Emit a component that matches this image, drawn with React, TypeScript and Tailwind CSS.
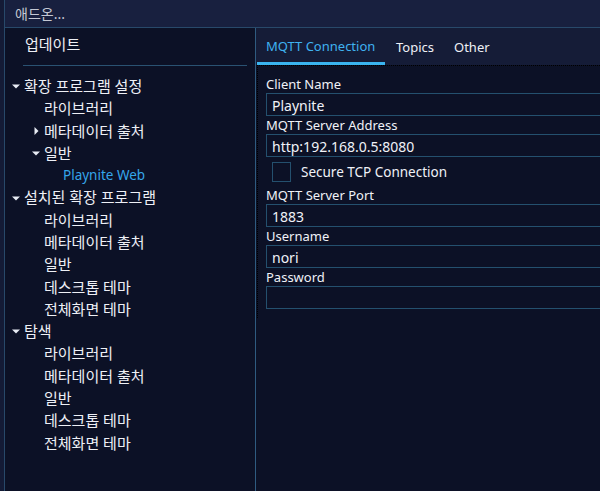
const font = { fontFamily: '"Noto Sans", "Noto Sans CJK KR", sans-serif' };

function Caret({ open }: { open: boolean }) {
  return (
    <svg width="8" height="8" viewBox="0 0 8 8" className="shrink-0">
      {open ? <path d="M0 2.5 L8 2.5 L4 6.5 Z" fill="#e8ecf4" /> : <path d="M2.5 0 L6.5 4 L2.5 8 Z" fill="#e8ecf4" />}
    </svg>
  );
}

type Node = { label: string; depth: number; caret?: "open" | "closed"; active?: boolean };

const tree: Node[] = [
  { label: "확장 프로그램 설정", depth: 0, caret: "open" },
  { label: "라이브러리", depth: 1 },
  { label: "메타데이터 출처", depth: 1, caret: "closed" },
  { label: "일반", depth: 1, caret: "open" },
  { label: "Playnite Web", depth: 2, active: true },
  { label: "설치된 확장 프로그램", depth: 0, caret: "open" },
  { label: "라이브러리", depth: 1 },
  { label: "메타데이터 출처", depth: 1 },
  { label: "일반", depth: 1 },
  { label: "데스크톱 테마", depth: 1 },
  { label: "전체화면 테마", depth: 1 },
  { label: "탐색", depth: 0, caret: "open" },
  { label: "라이브러리", depth: 1 },
  { label: "메타데이터 출처", depth: 1 },
  { label: "일반", depth: 1 },
  { label: "데스크톱 테마", depth: 1 },
  { label: "전체화면 테마", depth: 1 },
];

function TreeRow({ node }: { node: Node }) {
  let pad = "pl-[39px]";
  if (node.caret && node.depth === 0) pad = "pl-[7px]";
  else if (node.caret) pad = "pl-[27px]";
  else if (node.depth === 2) pad = "pl-[58px]";
  return (
    <div
      className={`flex h-[22.3px] items-center gap-[4px] ${pad} ${
        node.active ? "text-[13.5px] text-[#35a6ea]" : "text-[15px] text-[#eef0f6]"
      }`}
    >
      {node.caret && <Caret open={node.caret === "open"} />}
      <span>{node.label}</span>
    </div>
  );
}

function Field({ label, value }: { label: string; value: string }) {
  return (
    <div>
      <div className="h-[18px] text-[13px] leading-[18px] text-[#f0f2f8]">{label}</div>
      <div className="flex h-[23px] w-[400px] items-center border border-[#24506e] px-[5px] pt-[1px] text-[14px] text-[#f0f2f8]">
        {value}
      </div>
    </div>
  );
}

export default function App() {
  return (
    <div className="h-[491px] w-[600px] overflow-hidden bg-[#0c1126]" style={font}>
      <div className="flex h-full bg-[#141b36]">
        <div className="w-[4px] shrink-0" />
        <div className="flex flex-1 flex-col border-l border-[#28496a]">
          {/* title bar */}
          <div className="flex h-[28px] shrink-0 items-center border-b border-[#28496a] bg-[#18203f] pl-[10px] text-[14px] text-[#c4c8d4]">
            애드온...
          </div>
          <div className="flex min-h-0 flex-1">
            {/* sidebar */}
            <div className="w-[251px] shrink-0 border-r border-[#2f5b80] bg-[#0c1126]">
              <div className="flex h-[30px] items-center pl-[20px] pt-[2px] text-[15px] text-[#eef0f6]">업데이트</div>
              <div className="ml-[18px] mr-[8px] mt-[7px] border-b border-[#2a5272]" />
              <div className="pt-[9px]">
                {tree.map((n, i) => (
                  <TreeRow key={i} node={n} />
                ))}
              </div>
            </div>
            {/* right panel */}
            <div className="flex min-w-0 flex-1 flex-col bg-[#0c1126]">
              <div className="flex h-[37px] shrink-0 items-end bg-[#151c37] pl-[1px] text-[13px]">
                <div className="flex h-full w-[128px] flex-col justify-between">
                  <div className="flex flex-1 items-center pl-[9px] pt-[4px] text-[#3fb2f0]">MQTT Connection</div>
                  <div className="h-[3px] bg-[#3ab4f0]" />
                </div>
                <div className="flex h-full items-center pl-[11px] pt-[3px] text-[#eef0f6]">Topics</div>
                <div className="flex h-full items-center pl-[20px] pt-[3px] text-[#eef0f6]">Other</div>
              </div>
              <div className="ml-[1px] h-[253px] border-l border-t border-dotted border-black pl-[8px] pt-[9px]">
                <Field label="Client Name" value="Playnite" />
                <Field label="MQTT Server Address" value="http:192.168.0.5:8080" />
                <div className="flex h-[29px] items-center pl-[6px]">
                  <div className="h-[20px] w-[19px] border border-[#24506e]" />
                  <span className="ml-[10px] pt-[2px] text-[13.5px] text-[#f0f2f8]">Secure TCP Connection</span>
                </div>
                <Field label="MQTT Server Port" value="1883" />
                <Field label="Username" value="nori" />
                <Field label="Password" value="" />
              </div>
            </div>
          </div>
        </div>
      </div>
    </div>
  );
}
